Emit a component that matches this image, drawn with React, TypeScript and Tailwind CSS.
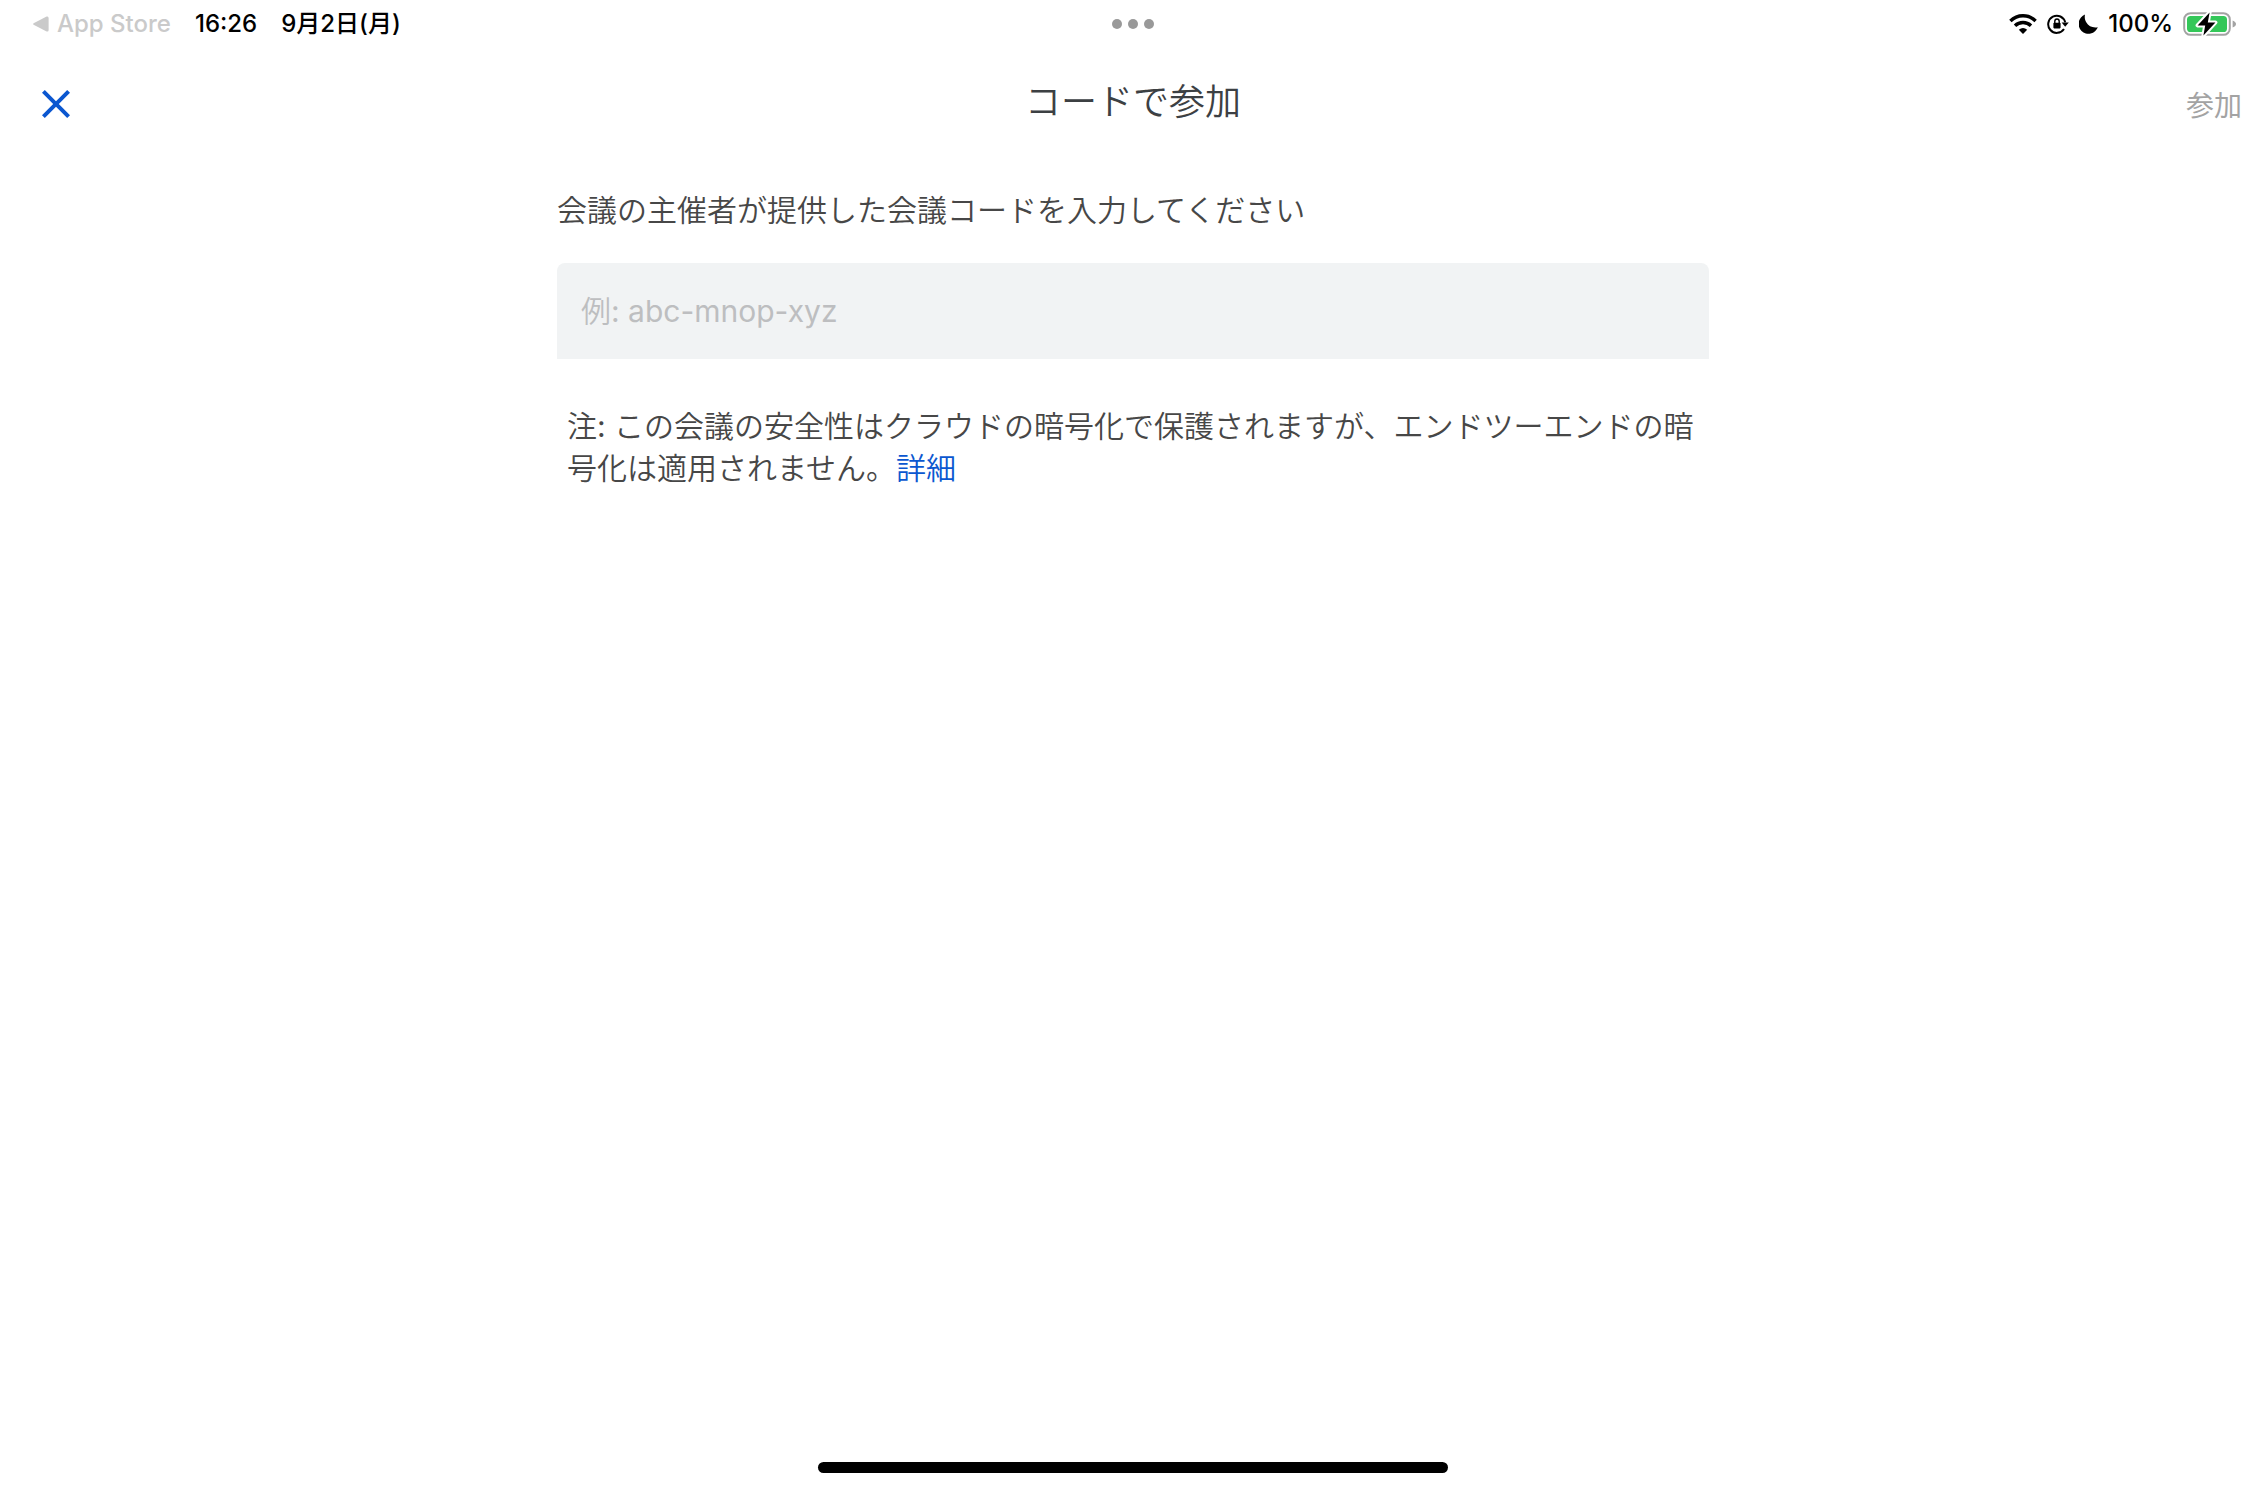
import React, { useState } from 'react';
import { MdClose } from 'react-icons/md';

const WifiIcon = () => (
  <svg width="28" height="20" viewBox="0 0 28 20" fill="none" aria-hidden="true">
    <path d="M1.4 7A17.8 17.8 0 0 1 26.6 7" stroke="black" strokeWidth="3.4" />
    <path d="M6 11.8A11.4 11.4 0 0 1 22 11.8" stroke="black" strokeWidth="3.4" />
    <path d="M14 20L9.8 15.8Q14 12.2 18.2 15.8Z" fill="black" />
  </svg>
);

const RotationLockIcon = () => (
  <svg width="22" height="20" viewBox="0 0 22 20" fill="none" aria-hidden="true">
    <path d="M17 15A8.6 8.6 0 1 1 18.2 8.4" stroke="black" strokeWidth="2" />
    <path d="M14.6 8.4H21.8L18.2 12.8Z" fill="black" />
    <rect x="6.4" y="8.8" width="7.2" height="5.6" rx="0.8" fill="black" />
    <path d="M7.8 9V7.2A2.2 2.2 0 0 1 12.2 7.2V9" stroke="black" strokeWidth="1.4" />
  </svg>
);

const MoonIcon = () => (
  <svg width="19" height="20" viewBox="0 0 19 20" aria-hidden="true">
    <path d="M6 0.6A10.6 10.6 0 0 0 18.8 13.2A9.9 9.9 0 1 1 6 0.6Z" fill="black" />
  </svg>
);

const BatteryIcon = () => (
  <svg width="55" height="26" viewBox="0 0 55 26" fill="none" aria-hidden="true">
    <rect x="1.2" y="2.2" width="45.6" height="21.6" rx="6.4" stroke="#a3a3a3" strokeWidth="2" />
    <path d="M49.6 9.4C52 10.4 53 11.6 53 13S52 15.6 49.6 16.6Z" fill="#a3a3a3" />
    <rect x="4" y="5" width="40" height="16" rx="3.6" fill="#34c759" />
    <path
      d="M26.6 1.4L14.6 14.4H22.2L20.4 24.6L32.4 11.4H24.8Z"
      fill="black"
      stroke="white"
      strokeWidth="4"
      strokeLinejoin="round"
      paintOrder="stroke"
    />
  </svg>
);

const StatusBar = () => (
  <div className="grid grid-cols-[1fr_auto_1fr] items-center h-12 px-7 text-2xl font-medium text-black">
    <div className="flex items-center">
      <a href="#app-store" className="flex items-center gap-2 pl-1 text-[#cacaca]">
        <svg width="17" height="16" viewBox="0 0 17 16" aria-hidden="true">
          <path d="M1.6 7.2L14.6 0.6Q16.6 0 16.6 2V14Q16.6 16 14.6 15.4L1.6 8.8Q0.4 8 1.6 7.2Z" fill="#cacaca" />
        </svg>
        App Store
      </a>
      <span className="ml-6">16:26</span>
      <span className="ml-6 font-['Inter','Noto_Sans_CJK_JP',sans-serif]">9月2日(月)</span>
    </div>

    <div className="flex gap-1.5">
      {[0, 1, 2].map((dot) => (
        <span key={dot} className="size-2.5 rounded-full bg-[#999999]"></span>
      ))}
    </div>

    <div className="flex items-center justify-end gap-2.5">
      <WifiIcon />
      <RotationLockIcon />
      <MoonIcon />
      <span>100%</span>
      <BatteryIcon />
    </div>
  </div>
);

const Header = () => (
  <header className="grid grid-cols-[1fr_auto_1fr] items-center h-28 px-6">
    <button type="button" aria-label="閉じる" className="justify-self-start pl-2 text-[#0b57d0]">
      <MdClose size={48} />
    </button>
    <h1 className="pb-1 text-4xl font-normal text-[#3c4043]">コードで参加</h1>
    <button type="button" disabled className="justify-self-end text-[28px] font-normal text-[#a3a3a3] font-['Noto_Sans_CJK_JP',sans-serif]">
      参加
    </button>
  </header>
);

const App = () => {
  const [code, setCode] = useState('');

  return (
    <div
      lang="ja"
      className="flex flex-col min-h-screen bg-white font-['Inter','Noto_Sans_CJK_JP_DemiLight','Noto_Sans_CJK_JP',sans-serif]"
    >
      <StatusBar />
      <Header />

      <main className="grow w-full max-w-6xl mx-auto pt-[30px] text-[30px] font-normal text-[#474747]">
        <label htmlFor="meeting-code" className="block leading-10">
          会議の主催者が提供した会議コードを入力してください
        </label>
        <input
          id="meeting-code"
          type="text"
          value={code}
          onChange={(e) => setCode(e.target.value)}
          placeholder="例: abc-mnop-xyz"
          className="block w-full h-24 mt-[33px] px-6 rounded-t-lg bg-[#f1f3f4] placeholder:text-[#bdbec0] outline-none"
        />
        <p className="mt-[46px] px-2.5 leading-[42px]">
          注: この会議の安全性はクラウドの暗号化で保護されますが、エンドツーエンドの暗号化は適用されません。
          <a href="#details" className="text-[#0b57d0]">詳細</a>
        </p>
      </main>

      <div className="w-[630px] h-[11px] mx-auto mb-[15px] rounded-full bg-black"></div>
    </div>
  );
};

export default App;
